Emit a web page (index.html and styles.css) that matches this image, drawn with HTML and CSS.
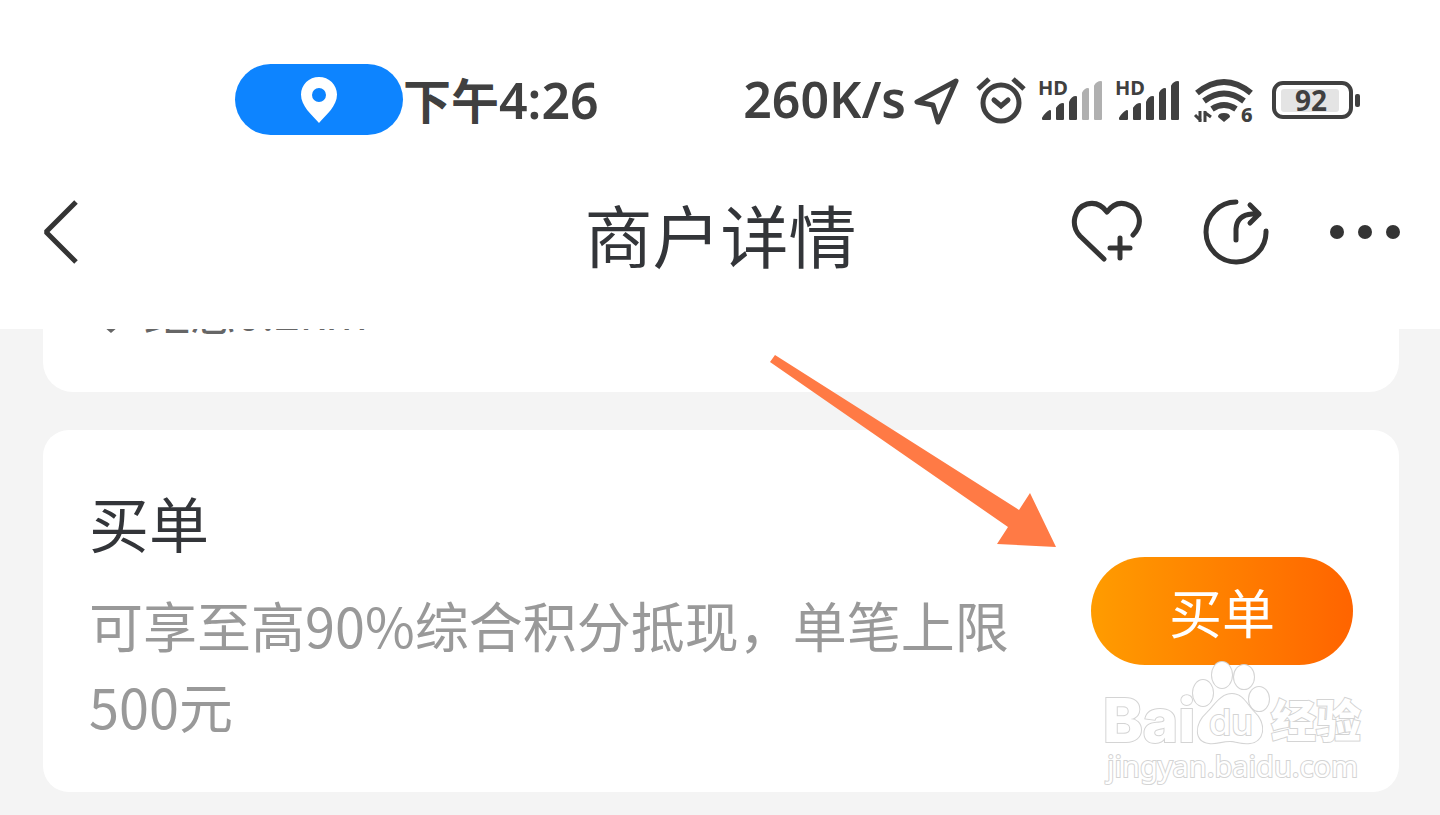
FILE: index.html
```html
<!DOCTYPE html>
<html lang="zh-CN">
<head>
  <meta charset="UTF-8">
  <meta name="viewport" content="width=device-width, initial-scale=1.0">
  <title>商户详情</title>
  <link rel="stylesheet" href="styles.css">
</head>
<body>
  <header class="header">
    <div class="status-bar">
      <div class="location-pill">
        <svg width="36" height="48" viewBox="0 0 36 48">
          <path fill="#fff" fill-rule="evenodd" d="M18 1C8 1 0 8.800 0 18.500C0 30 10.500 38.500 18 47C25.500 38.500 36 30 36 18.500C36 8.800 28 1 18 1ZM18 12A7 7 0 1 1 18 26A7 7 0 1 1 18 12Z"/>
        </svg>
      </div>
      <span class="time">下午<span class="digits">4:26</span></span>
      <div class="status-icons">
        <span class="speed digits">260K/s</span>
        <svg width="48" height="48" viewBox="0 0 48 48" fill="none" stroke="#404040" stroke-width="5" stroke-linejoin="round">
          <path d="M42 5L3 26L19 29L24 46Z"/>
        </svg>
        <svg width="50" height="48" viewBox="0 0 50 48" fill="none" stroke="#404040" stroke-width="5">
          <circle cx="25" cy="27" r="18"/>
          <path d="M2 13L13 3M37 3L48 13"/>
          <path d="M18 24L25 30L32 24" stroke-linecap="round"/>
        </svg>
        <svg class="signal" width="63" height="48" viewBox="0 0 63 48" fill="#404040" stroke="#404040" stroke-width="2" stroke-linejoin="round">
          <text x="-2" y="19">HD</text>
          <path d="M3 43V42Q7 36 10 35V43Z"/>
          <path d="M17 43V32Q20 28 23 28V43Z"/>
          <path d="M30 43V26Q32 21 36 21V43Z"/>
          <path class="off" d="M43 43V17Q45 13 48 13V43Z"/>
          <path class="off" d="M55 43V10Q57 6 61 6V43Z"/>
        </svg>
        <svg class="signal" width="63" height="48" viewBox="0 0 63 48" fill="#404040" stroke="#404040" stroke-width="2" stroke-linejoin="round">
          <text x="-2" y="19">HD</text>
          <path d="M3 43V42Q7 36 10 35V43Z"/>
          <path d="M17 43V32Q20 28 23 28V43Z"/>
          <path d="M30 43V26Q32 21 36 21V43Z"/>
          <path d="M43 43V17Q45 13 48 13V43Z"/>
          <path d="M55 43V10Q57 6 61 6V43Z"/>
        </svg>
        <svg class="wifi" width="64" height="48" viewBox="0 0 64 48" fill="none" stroke="#404040" stroke-width="6">
          <path d="M3 17Q30 -5 57 17"/>
          <path d="M10 25Q30 10 50 25"/>
          <path d="M18 33Q30 25 42 33"/>
          <path d="M30 46L24 41Q24 37 30 37T36 41Z" fill="#404040" stroke="none"/>
          <path d="M6 35V46M1 39L7 45M11 46V35M10 36L17 41" stroke-width="3"/>
          <text x="47" y="46" fill="#404040" stroke="none">6</text>
        </svg>
        <svg class="battery" width="88" height="48" viewBox="0 0 88 48">
          <rect x="2" y="7" width="77" height="34" rx="9" fill="none" stroke="#404040" stroke-width="4"/>
          <rect x="9" y="13" width="58" height="23" rx="3" fill="#e4e4e4"/>
          <rect x="83" y="18" width="5" height="13" rx="2" fill="#404040"/>
          <text x="39" y="35" text-anchor="middle" fill="#404040">92</text>
        </svg>
      </div>
    </div>
    <nav class="nav">
      <button class="icon-btn" aria-label="返回">
        <svg width="38" height="66" viewBox="0 0 38 66" fill="none" stroke="#343434" stroke-width="5">
          <path d="M35 3L5 33L35 63" stroke-linejoin="bevel"/>
        </svg>
      </button>
      <h1 class="title">商户详情</h1>
      <div class="actions">
        <button class="icon-btn" aria-label="收藏">
          <svg width="70" height="66" viewBox="0 0 70 66" fill="none" stroke="#343434" stroke-width="5" stroke-linecap="round" stroke-linejoin="round">
            <path d="M32 60L8 37C-2 26 2 9 15 5Q27 2 35 13Q43 2 54 5C68 9 72 25 61 36"/>
            <path d="M48 39V59M38 49H58"/>
          </svg>
        </button>
        <button class="icon-btn" aria-label="分享">
          <svg width="66" height="66" viewBox="0 0 66 66" fill="none" stroke="#343434" stroke-width="5" stroke-linecap="round" stroke-linejoin="round">
            <path d="M33 3A30 30 0 1 0 63 32"/>
            <path d="M33 41V30Q34 16 49 15H56M47 6L56 15L47 24"/>
          </svg>
        </button>
        <button class="icon-btn" aria-label="更多">
          <svg width="70" height="66" viewBox="0 0 70 66" fill="#343434">
            <circle cx="7" cy="33" r="7"/>
            <circle cx="35" cy="33" r="7"/>
            <circle cx="63" cy="33" r="7"/>
          </svg>
        </button>
      </div>
    </nav>
  </header>

  <main class="content">
    <section class="card card-distance">
      <svg width="20" height="46" viewBox="0 0 20 46" fill="none" stroke="#666" stroke-width="3">
        <path d="M3 38L10 44L17 38"/>
      </svg>
      <span>距您0.2km</span>
    </section>

    <section class="card card-pay">
      <div class="pay-info">
        <h2>买单</h2>
        <p>可享至高90%综合积分抵现，单笔上限500元</p>
      </div>
      <button class="pay-btn">买单</button>
    </section>

    <svg class="arrow" width="288" height="194" viewBox="0 0 288 194">
      <path fill="#ff7a45" d="M6 0L250 155L261 138L287 192L228 189L239 172L1 7Z"/>
    </svg>

    <svg class="watermark" width="264" height="126" viewBox="0 0 264 126">
      <ellipse cx="100" cy="32" rx="10" ry="13"/>
      <ellipse cx="119" cy="14" rx="10" ry="13"/>
      <ellipse cx="141" cy="16" rx="10" ry="12"/>
      <ellipse cx="156" cy="38" rx="10" ry="12"/>
      <path d="M129 33C139 33 143 42 150 50C165 64 160 81 147 82C138 83 133 80 127 80C119 80 113 83 106 82C91 80 92 63 104 52C112 44 118 33 129 33Z"/>
      <text class="logo" x="0" y="81">Bai</text>
      <text class="logo-du" x="106" y="74">du</text>
      <text class="logo-cn" x="168" y="77">经验</text>
      <text class="site" x="4" y="116">jingyan.baidu.com</text>
    </svg>
  </main>
</body>
</html>
```

FILE: styles.css
```css
* {
  box-sizing: border-box;
}
body {
  margin: 0;
  min-height: 100vh;
  background-color: #f4f4f4;
  font-family: "Noto Sans CJK SC", sans-serif;
  color: #333539;
}
h1, h2, p {
  margin: 0;
  font-weight: normal;
}
svg {
  display: block;
  flex-shrink: 0;
  overflow: visible;
}
button {
  border: none;
  font-family: inherit;
  cursor: pointer;
}
.header {
  background-color: #fff;
  padding-top: 64px;
}

/* status bar */
.status-bar {
  display: flex;
  align-items: center;
  height: 71px;
  padding: 0 80px 0 235px;
  color: #404040;
}
.location-pill {
  display: flex;
  align-items: center;
  justify-content: center;
  width: 168px;
  height: 71px;
  border-radius: 36px;
  background-color: #0d84ff;
}
.time {
  font-size: 48px;
  line-height: 71px;
  font-weight: 700;
  white-space: nowrap;
}
.digits {
  font-family: "Noto Sans", sans-serif;
  font-size: 50px;
  line-height: 71px;
  font-weight: 600;
}
.status-icons {
  display: flex;
  align-items: center;
  gap: 14px;
  margin-left: auto;
}
.speed {
  margin-right: -6px;
}
.signal text {
  font-family: "Noto Sans", sans-serif;
  font-size: 20px;
  font-weight: 700;
  stroke: none;
}
.signal .off {
  fill: #b0b0b0;
  stroke: #b0b0b0;
}
.wifi text {
  font-family: "Noto Sans", sans-serif;
  font-size: 20px;
  font-weight: 800;
}
.battery text {
  font-family: "Noto Sans", sans-serif;
  font-size: 28px;
  font-weight: 700;
}

.nav {
  display: grid;
  grid-template-columns: 1fr auto 1fr;
  align-items: center;
  height: 194px;
  padding: 0 40px 0 41px;
}
.icon-btn {
  justify-self: start;
  padding: 0;
  background: none;
}
.title {
  padding-top: 4px;
  font-size: 68px;
  line-height: 96px;
}
.actions {
  display: flex;
  justify-self: end;
  gap: 61px;
}

.content {
  position: relative;
  display: flex;
  flex-direction: column;
  gap: 38px;
  padding: 0 41px 23px 43px;
  overflow: hidden;
}
.card {
  display: flex;
  background-color: #fff;
  border-radius: 26px;
}
/* the upper part of this card is scrolled under the header */
.card-distance {
  align-items: flex-end;
  gap: 23px;
  height: 63px;
  padding: 0 58px 59px;
  border-radius: 0 0 30px 30px;
  font-size: 46px;
  line-height: 46px;
  color: #666;
}
.card-pay {
  align-items: center;
  gap: 70px;
  padding: 46px;
}
.pay-info {
  flex: 1;
  padding-top: 4px;
}
.pay-info h2 {
  margin-bottom: 20px;
  font-size: 60px;
  line-height: 84px;
}
.pay-info p {
  font-size: 54px;
  line-height: 81px;
  color: #999;
}
.pay-btn {
  width: 262px;
  height: 108px;
  padding: 0;
  border-radius: 54px;
  background: linear-gradient(to right, #ff9c00, #ff6400);
  color: #fff;
  font-size: 53px;
  line-height: 108px;
}

.arrow {
  position: absolute;
  top: 26px;
  right: 383px;
}
.watermark {
  position: absolute;
  right: 73px;
  bottom: 28px;
  pointer-events: none;
  fill: #fff;
  stroke: #d4d4d4;
  stroke-width: 2px;
  paint-order: stroke;
}
.logo {
  font-family: Inter, sans-serif;
  font-size: 60px;
  font-weight: 800;
}
.logo-du {
  font-family: Inter, sans-serif;
  font-size: 36px;
  font-weight: 500;
}
.logo-cn {
  font-size: 45px;
  font-weight: 900;
}
.site {
  font-family: "Noto Sans", sans-serif;
  font-size: 29px;
}
```
